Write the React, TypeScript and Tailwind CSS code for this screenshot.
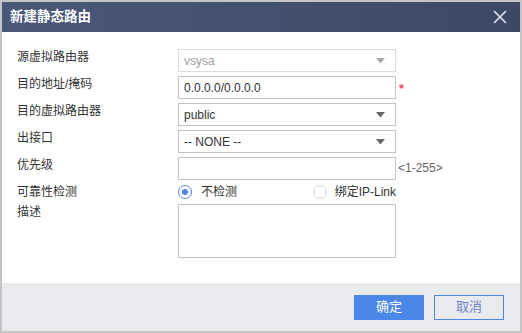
import React from 'react';

const font = { fontFamily: 'Arial, "Liberation Sans", "Noto Sans CJK SC", sans-serif' };

const Caret: React.FC<{ disabled?: boolean }> = ({ disabled }) => (
  <svg width="9" height="6" viewBox="0 0 9 6" className="ml-auto">
    <path d="M0 0h9L4.5 5.5z" fill={disabled ? '#a8a8a8' : '#666666'} />
  </svg>
);

const Row: React.FC<{ label: string; children: React.ReactNode }> = ({ label, children }) => (
  <div className="flex items-start">
    <div className="w-[176px] shrink-0 pl-[15px] pt-[1px] text-[12px] leading-[15px] text-[#333]">{label}</div>
    {children}
  </div>
);

export default function App() {
  return (
    <div className="w-[522px] h-[333px] border-2 border-[#c4c4c4] bg-white flex flex-col overflow-hidden" style={font}>
      <div className="h-[30px] shrink-0 flex items-center justify-between bg-gradient-to-r from-[#4a5779] to-[#3d4964] pl-[8px] pr-[13px]">
        <span className="text-white font-bold text-[13.5px]">新建静态路由</span>
        <svg width="14" height="14" viewBox="0 0 14 14">
          <path d="M1 1l12 12M13 1L1 13" stroke="#e4e6ec" strokeWidth="1.6" />
        </svg>
      </div>

      <div className="flex-1 flex flex-col gap-[4px] pt-[17px]">
        <Row label="源虚拟路由器">
          <div className="w-[218px] h-[23px] border border-[#dcdcdc] flex items-center px-[5px] pr-[10px] text-[12px] text-[#a0a0a0]">
            vsysa
            <Caret disabled />
          </div>
        </Row>
        <Row label="目的地址/掩码">
          <div className="w-[218px] h-[23px] border border-[#c3c3c8] flex items-center px-[5px] text-[12px] text-[#333]">
            0.0.0.0/0.0.0.0
          </div>
          <span className="ml-[3px] mt-[6px] text-[13px] font-bold leading-none text-[#f2476a]">*</span>
        </Row>
        <Row label="目的虚拟路由器">
          <div className="w-[218px] h-[23px] border border-[#c3c3c8] flex items-center px-[5px] pr-[10px] text-[12px] text-[#333]">
            public
            <Caret />
          </div>
        </Row>
        <Row label="出接口">
          <div className="w-[218px] h-[23px] border border-[#c3c3c8] flex items-center px-[5px] pr-[10px] text-[12px] text-[#333]">
            -- NONE --
            <Caret />
          </div>
        </Row>
        <Row label="优先级">
          <div className="w-[218px] h-[23px] border border-[#c3c3c8]" />
          <span className="ml-[2px] mt-[4px] text-[12px] leading-[14px] text-[#666]">&lt;1-255&gt;</span>
        </Row>
        <Row label="可靠性检测">
          <div className="w-[218px] h-[16px] flex items-center justify-between text-[12px] text-[#333]">
            <div className="flex items-center gap-[9px]">
              <span className="w-[14px] h-[14px] rounded-full border border-[#4a86e8] flex items-center justify-center">
                <span className="w-[6px] h-[6px] rounded-full bg-[#4a86e8]" />
              </span>
              不检测
            </div>
            <div className="flex items-center gap-[8px]">
              <span className="w-[14px] h-[14px] rounded-full border border-[#cfcfcf]" />
              绑定IP-Link
            </div>
          </div>
        </Row>
        <Row label="描述">
          <div className="w-[218px] h-[54px] border border-[#c3c3c8]" />
        </Row>
      </div>

      <div className="h-[48px] shrink-0 bg-[#e9eaee] flex items-center justify-end gap-[10px] pr-[16px]">
        <button className="w-[70px] h-[25px] bg-[#4a87e6] text-white text-[13px]">确定</button>
        <button className="w-[70px] h-[25px] border border-[#4a87e6] text-[#7480cc] text-[13px]">取消</button>
      </div>
    </div>
  );
}
